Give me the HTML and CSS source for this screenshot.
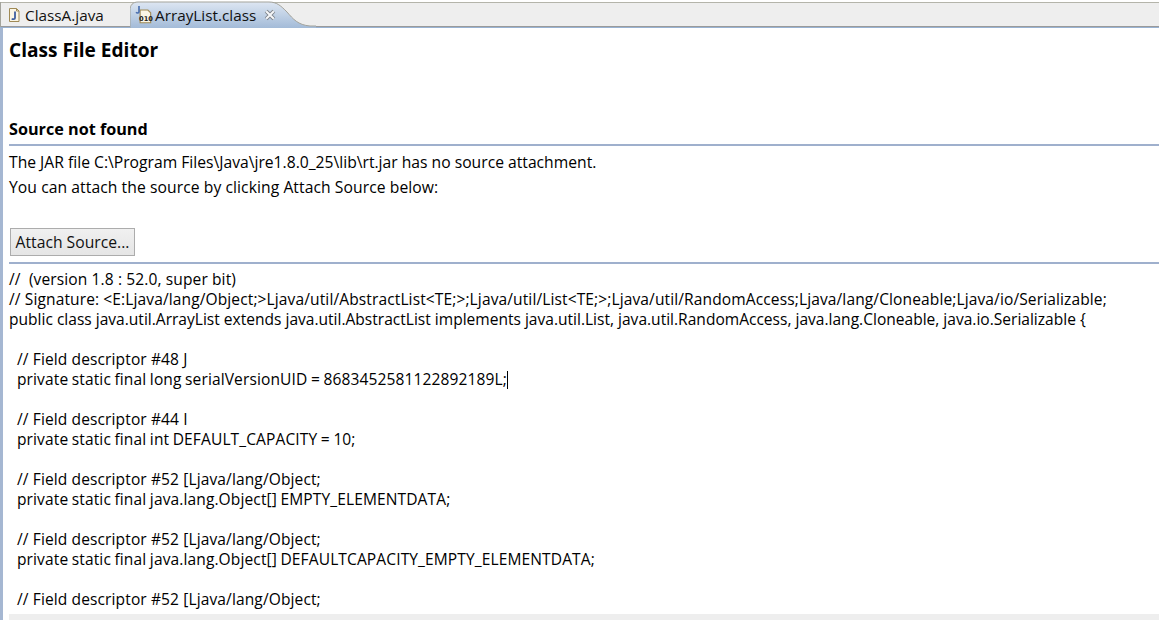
FILE: index.html
```html
<!DOCTYPE html>
<html lang="en">
<head>
<meta charset="utf-8">
<title>ArrayList.class</title>
<link rel="stylesheet" href="styles.css">
</head>
<body>
<div class="tabbar">
  <div class="tab">
    <svg class="icon" width="16" height="16" viewBox="0 0 16 16"><path d="M2.500 1.500h7l2.500 2.500v10.500h-9.500z" fill="#fbf6e6" stroke="#a08a55"/><path d="M9.500 1.500v2.500h2.500" fill="none" stroke="#a08a55"/><path d="M8 4.500v6.500c0 1.500-2.500 1.500-3 .5" fill="none" stroke="#3f5f9f" stroke-width="1.800"/></svg>
    <span>ClassA.java</span>
  </div>
  <div class="tab active">
    <svg class="tabshape" width="186" height="28" viewBox="0 0 186 28" preserveAspectRatio="none"><defs><linearGradient id="g" x1="0" y1="0" x2="0" y2="1"><stop offset="0" stop-color="#dde6f2"/><stop offset="1" stop-color="#a3bbd8"/></linearGradient></defs><path d="M0 28V10C0 5 3 2 8 2H139C147 2 151 6 157 12C163 19 168 25 180 26H186V28Z" fill="url(#g)"/><path d="M0 28V10C0 5 3 2 8 2H139C147 2 151 6 157 12C163 19 168 25 180 26H186" fill="none" stroke="#a3a39b"/></svg>
    <svg class="icon" width="20" height="20" viewBox="0 0 18 18"><path d="M5.500 4.500h7l2.500 2.500v9h-9.500z" fill="#fbf6e6" stroke="#a08a55"/><path d="M4.500 1v5c0 1.500-2 1.500-2.500.5" fill="none" stroke="#4a6fb0" stroke-width="1.500"/><text x="4.500" y="14" class="bits">010</text></svg>
    <span>ArrayList.class</span>
    <svg class="close" width="12" height="12" viewBox="0 0 11 11"><path d="M2 2l7 7M9 2l-7 7" stroke="#7f858c" stroke-width="3.600"/><path d="M2 2l7 7M9 2l-7 7" stroke="#f6f7f9" stroke-width="1.800"/></svg>
  </div>
</div>
<main class="editor">
  <h1 class="title">Class File Editor</h1>
  <h2 class="heading">Source not found</h2>
  <div class="rule"></div>
  <p class="msg">The JAR file C:\Program Files\Java\jre1.8.0_25\lib\rt.jar has no source attachment.</p>
  <p class="msg msg-wide">You can attach the source by clicking Attach Source below:</p>
  <button class="btn" type="button">Attach Source...</button>
  <div class="rule rule-low"></div>
  <div class="code">
    <div class="line">//  (version 1.8 : 52.0, super bit)</div>
    <div class="line">// Signature: &lt;E:Ljava/lang/Object;&gt;Ljava/util/AbstractList&lt;TE;&gt;;Ljava/util/List&lt;TE;&gt;;Ljava/util/RandomAccess;Ljava/lang/Cloneable;Ljava/io/Serializable;</div>
    <div class="line decl">public class java.util.ArrayList extends java.util.AbstractList implements java.util.List, java.util.RandomAccess, java.lang.Cloneable, java.io.Serializable {</div>
    <div class="line"></div>
    <div class="line indent">// Field descriptor #48 J</div>
    <div class="line indent field">private static final long serialVersionUID = 8683452581122892189L;<span class="caret"></span></div>
    <div class="line"></div>
    <div class="line indent">// Field descriptor #44 I</div>
    <div class="line indent field">private static final int DEFAULT_CAPACITY = 10;</div>
    <div class="line"></div>
    <div class="line indent">// Field descriptor #52 [Ljava/lang/Object;</div>
    <div class="line indent field">private static final java.lang.Object[] EMPTY_ELEMENTDATA;</div>
    <div class="line"></div>
    <div class="line indent">// Field descriptor #52 [Ljava/lang/Object;</div>
    <div class="line indent field">private static final java.lang.Object[] DEFAULTCAPACITY_EMPTY_ELEMENTDATA;</div>
    <div class="line"></div>
    <div class="line indent">// Field descriptor #52 [Ljava/lang/Object;</div>
  </div>
  <div class="hscroll"></div>
</main>
</body>
</html>
```
FILE: styles.css
```css
* { box-sizing: border-box; }
html, body { margin: 0; height: 100%; overflow: hidden; background: #fff; }
body { font-family: "Open Sans", "Noto Sans", sans-serif; font-size: 15.6px; color: #000; width: 1159px; height: 620px; }
.tabbar { height: 28px; background: #eeeeee; border-top: 2px solid #fff; display: flex; align-items: stretch; box-shadow: inset 0 1px 0 #b4b4aa, inset 0 -1px 0 #9a9a9a; border-bottom: 1px solid #98b2d2; position: relative; }
.tab { display: flex; align-items: center; height: 25px; font-size: 15.3px; color: #111; position: relative; }
.tab:first-child { width: 130px; padding-left: 6px; gap: 2px; border-left: 1px solid #a3a39b; }
.tab.active { width: 186px; padding-left: 4px; gap: 1px; }
.tabshape { position: absolute; left: 0; top: -2px; }
.tab .icon, .tab span, .tab .close { position: relative; }
.bits { font-family: "DejaVu Sans", sans-serif; font-size: 6px; fill: #222; font-weight: bold; }
.close { margin-left: 7px; }
.editor { border-left: 3px solid #a5b7d2; height: 592px; padding-left: 6px; position: relative; overflow: hidden; }
.title { margin: 0; padding-top: 10px; font-size: 19.1px; line-height: 25px; font-weight: 700; height: 35px; }
.heading { margin: 56px 0 0; font-size: 16.2px; line-height: 20px; font-weight: 700; height: 25px; }
.rule { height: 2px; background: #9fb0cd; margin-bottom: 4px; margin-top: 0; }
.msg { margin: 0; font-size: 15.68px; line-height: 25px; height: 25px; }
.msg-wide { letter-spacing: 0.07px; }
.btn { display: block; margin: 28px 0 0 1px; width: 125px; height: 28px; border: 1px solid #acacac; background: linear-gradient(#f0f0f0, #e5e5e5); font: inherit; font-size: 15.7px; color: #111; padding: 0; }
.rule-low { margin-top: 6px; margin-bottom: 0; }
.code { margin: 5px 0 0; font-size: 15.55px; line-height: 20px; letter-spacing: 0.11px; }
.line { height: 20px; white-space: pre; }
.indent { padding-left: 8px; }
.decl { letter-spacing: 0; }
.field { word-spacing: -0.6px; }
.caret { display: inline-block; width: 1px; height: 18px; background: #000; vertical-align: -4px; }
.hscroll { position: absolute; left: 6px; right: 0; bottom: 0; height: 6px; background: #eeeeee; }
```
